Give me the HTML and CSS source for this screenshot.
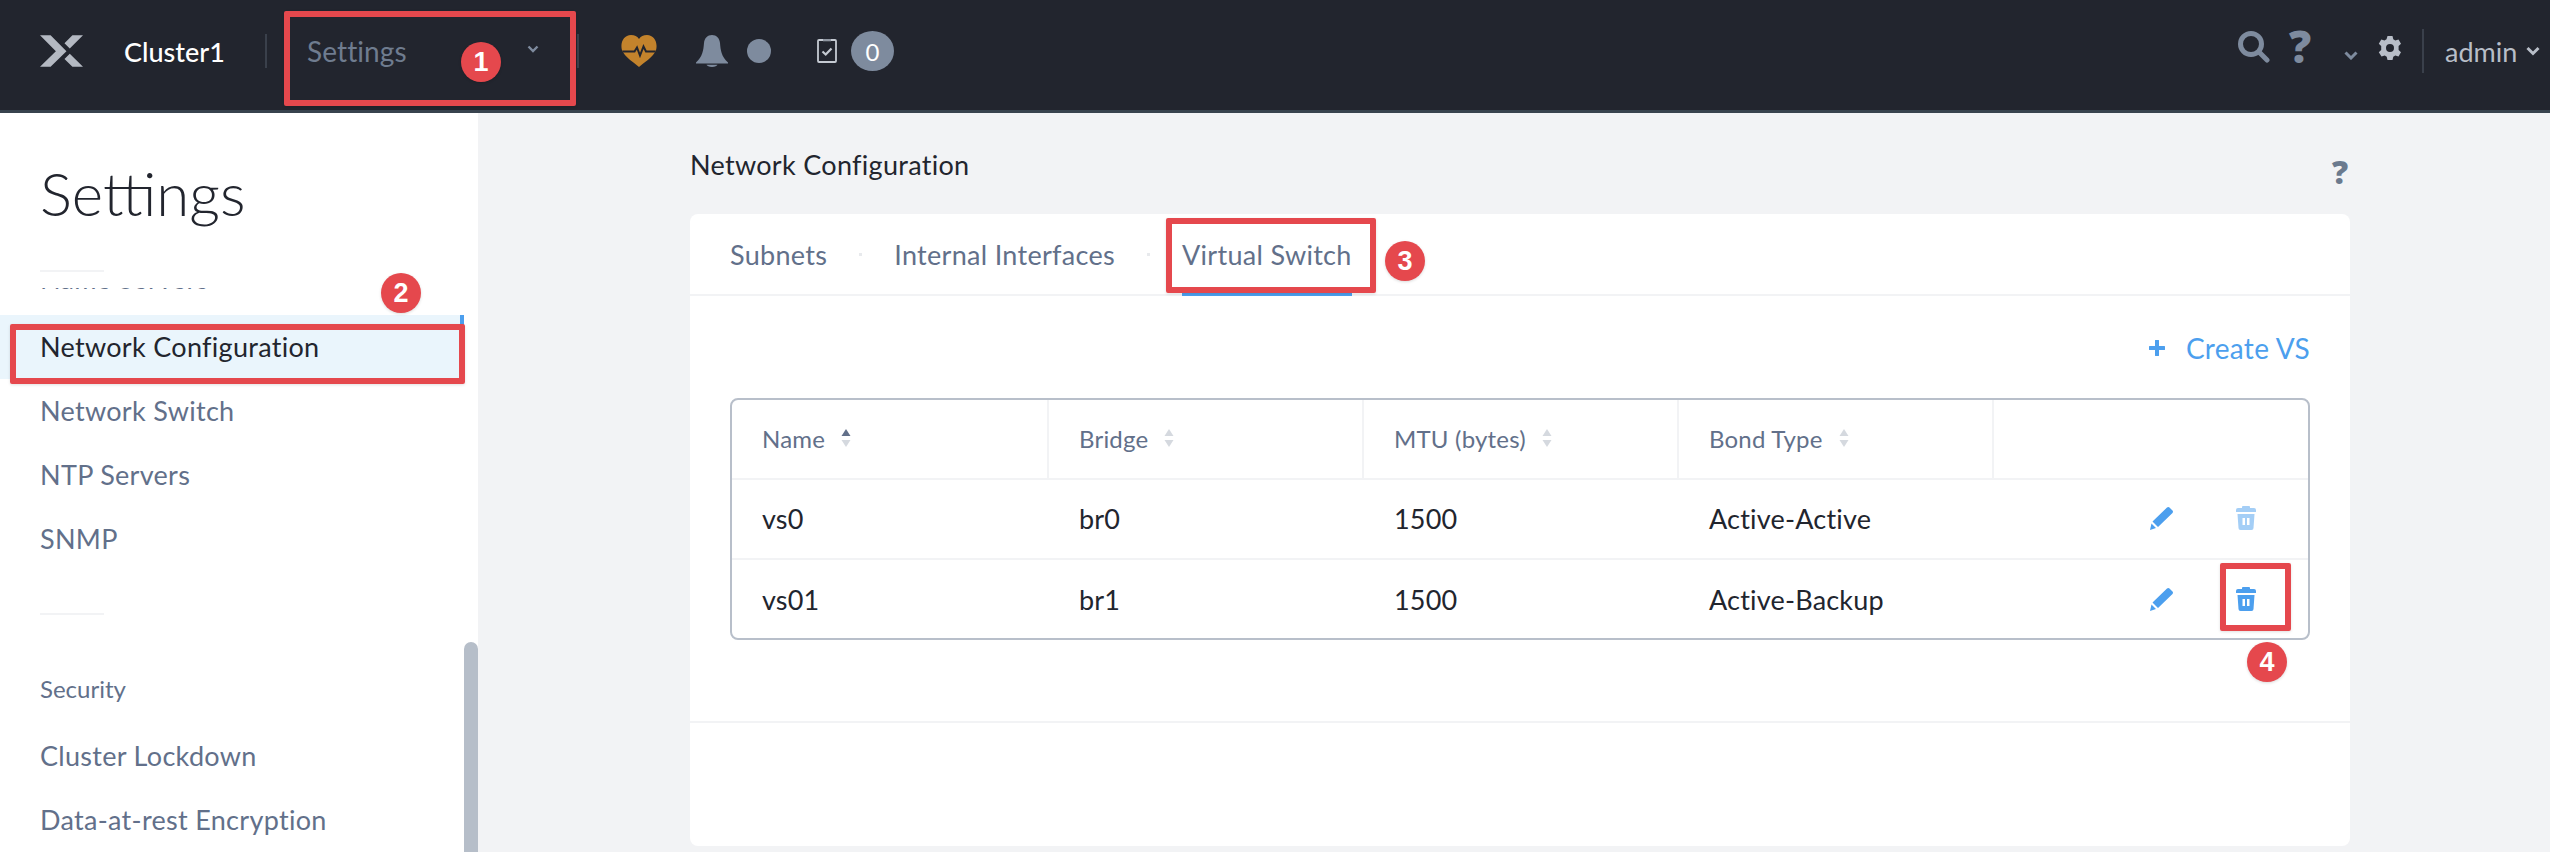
FILE: index.html
```html
<!DOCTYPE html>
<html lang="en">
<head>
<meta charset="utf-8">
<title>Network Configuration</title>
<link rel="stylesheet" href="styles.css">
</head>
<body>
<div class="page">
  <header class="topbar">
    <svg class="logo" viewBox="30 42 130 95"><path fill="#b4b9c2" d="M30 42h32l48 48-48 47H30l48-47zM160 42h-32l-24 24 16 16zM104 114l16-16 40 39h-32z"/></svg>
    <span class="cluster">Cluster1</span>
    <span class="vline vline-a"></span>
    <div class="crumb"><span>Settings</span><svg class="chev-s" viewBox="0 0 12 8"><path d="M1.500 1.500 6 6l4.500-4.500" fill="none" stroke="#7e8b9e" stroke-width="2.400"/></svg></div>
    <span class="vline"></span>
    <svg class="heart" viewBox="0 0 36 32"><path fill="#c3832c" d="M18 32C15 29 3 22 .8 14.500-.8 7 3 0 10 0c3.500 0 6.500 1.500 8 4 1.500-2.500 4.500-4 8-4 7 0 10.800 7 9.200 14.500C33 22 21 29 18 32z"/><path fill="none" stroke="#22252e" stroke-width="2" d="M1.500 16.500h12l2.500-4 3 8 3.500-9 2.500 5h9.500"/></svg>
    <svg class="bell" viewBox="0 0 32 32"><path fill="#7e8b9e" d="M16 0c4.500 0 7.500 3 8 8 .5 7 1.500 14 8 19.500v1H0v-1C6.500 22 7.500 15 8 8c.5-5 3.500-8 8-8z"/><path fill="#7e8b9e" d="M10.500 29.800h11C21 31 19 32 16 32s-5-1-5.500-2.200z"/></svg>
    <span class="dot"></span>
    <svg class="tasks" viewBox="0 0 20 24"><path d="M6 1H2a1 1 0 0 0-1 1v20a1 1 0 0 0 1 1h16a1 1 0 0 0 1-1V2a1 1 0 0 0-1-1h-4" fill="none" stroke="#c5cad2" stroke-width="1.800"/><path d="M6 1h8" stroke="#8f96a1" stroke-width="2.600"/><path d="m5.500 12.500 3.200 3 5.800-6" fill="none" stroke="#c5cad2" stroke-width="2.200"/></svg>
    <span class="count">0</span>
    <div class="tools">
      <svg class="search" viewBox="0 0 32 32"><circle cx="13" cy="13" r="10.500" fill="none" stroke="#7e8b9e" stroke-width="5"/><path d="m21 21 8 8" stroke="#7e8b9e" stroke-width="5" stroke-linecap="round"/></svg>
      <span class="qm">?</span>
      <svg class="chev-t" viewBox="0 0 14 9"><path d="M1.500 1.500 7 7l5.500-5.500" fill="none" stroke="#7e8b9e" stroke-width="3"/></svg>
      <svg class="gear" viewBox="0 0 24 24"><path fill="#b8bec8" fill-rule="evenodd" d="M9.500 0h5l.8 3.300 2 1.100 3.200-1 2.500 4.300-2.400 2.300v4l2.400 2.300-2.500 4.300-3.200-1-2 1.100-.8 3.300h-5l-.8-3.300-2-1.100-3.200 1L.8 16.300l2.400-2.300v-4L.8 7.700l2.500-4.300 3.200 1 2-1.100zM12 8a4 4 0 1 0 0 8 4 4 0 0 0 0-8z"/></svg>
      <span class="vline vline-b"></span>
      <span class="user">admin</span>
      <svg class="chev-u" viewBox="0 0 14 10"><path d="M1.500 2 7 7.500 12.500 2" fill="none" stroke="#b8bec8" stroke-width="3"/></svg>
    </div>
  </header>
  <div class="body">
    <aside class="sidebar">
      <h1 class="side-title">Settings</h1>
      <div class="rule"></div>
      <div class="menu">
        <div class="clip"><div class="item-clipped">Name Servers</div></div>
        <div class="item active">Network Configuration</div>
        <div class="item">Network Switch</div>
        <div class="item">NTP Servers</div>
        <div class="item">SNMP</div>
      </div>
      <div class="rule rule-b"></div>
      <div class="group">Security</div>
      <div class="item">Cluster Lockdown</div>
      <div class="item">Data-at-rest Encryption</div>
      <div class="thumb"></div>
    </aside>
    <main class="main">
      <div class="title-row">
        <span class="page-title">Network Configuration</span>
        <span class="qm qm-main">?</span>
      </div>
      <section class="card">
        <nav class="tabs">
          <span class="tab">Subnets</span><i class="tab-dot"></i>
          <span class="tab">Internal Interfaces</span><i class="tab-dot"></i>
          <span class="tab tab-on">Virtual Switch</span>
        </nav>
        <div class="actions">
          <span class="create"><svg class="plus" viewBox="0 0 16 16"><path d="M8 1v14M1 8h14" stroke="#4c9fee" stroke-width="4" stroke-linecap="round"/></svg>Create VS</span>
        </div>
        <div class="table">
          <div class="row head">
            <div class="cell">Name<svg class="sort" viewBox="0 0 10 18"><path class="up on" d="M5 0l4.500 7h-9z"/><path class="dn" d="M5 18l4.500-7h-9z"/></svg></div>
            <div class="cell">Bridge<svg class="sort" viewBox="0 0 10 18"><path class="up" d="M5 0l4.500 7h-9z"/><path class="dn" d="M5 18l4.500-7h-9z"/></svg></div>
            <div class="cell">MTU (bytes)<svg class="sort" viewBox="0 0 10 18"><path class="up" d="M5 0l4.500 7h-9z"/><path class="dn" d="M5 18l4.500-7h-9z"/></svg></div>
            <div class="cell">Bond Type<svg class="sort" viewBox="0 0 10 18"><path class="up" d="M5 0l4.500 7h-9z"/><path class="dn" d="M5 18l4.500-7h-9z"/></svg></div>
            <div class="cell cell-end"></div>
          </div>
          <div class="row">
            <div class="cell">vs0</div><div class="cell">br0</div><div class="cell">1500</div><div class="cell">Active-Active</div>
            <div class="cell cell-icons">
              <svg class="pen" viewBox="0 0 23 23"><path fill="#4c9fee" d="M17 0.500a2 2 0 0 1 2.500 0l3 3a2 2 0 0 1 0 2.500L8 20l-5.500-5.500zM1.500 16.500 6 21l-6 2z"/></svg>
              <svg class="trash faded" viewBox="0 0 20 24"><path fill="#4c9fee" fill-rule="evenodd" d="M7 0h6a1 1 0 0 1 1 1v1h4a2 2 0 0 1 2 2v2H0V4a2 2 0 0 1 2-2h4V1a1 1 0 0 1 1-1zM1.500 8h17l-1 14a2 2 0 0 1-2 2h-11a2 2 0 0 1-2-2zM6.500 12v7h2.500v-7zM11 12v7h2.500v-7z"/></svg>
            </div>
          </div>
          <div class="row">
            <div class="cell">vs01</div><div class="cell">br1</div><div class="cell">1500</div><div class="cell">Active-Backup</div>
            <div class="cell cell-icons">
              <svg class="pen" viewBox="0 0 23 23"><path fill="#4c9fee" d="M17 0.500a2 2 0 0 1 2.500 0l3 3a2 2 0 0 1 0 2.500L8 20l-5.500-5.500zM1.500 16.500 6 21l-6 2z"/></svg>
              <svg class="trash" viewBox="0 0 20 24"><path fill="#4c9fee" fill-rule="evenodd" d="M7 0h6a1 1 0 0 1 1 1v1h4a2 2 0 0 1 2 2v2H0V4a2 2 0 0 1 2-2h4V1a1 1 0 0 1 1-1zM1.500 8h17l-1 14a2 2 0 0 1-2 2h-11a2 2 0 0 1-2-2zM6.500 12v7h2.500v-7zM11 12v7h2.500v-7z"/></svg>
            </div>
          </div>
        </div>
        <div class="card-foot"></div>
      </section>
    </main>
  </div>
  <div class="mark box-1"></div>
  <div class="mark box-2"></div>
  <div class="mark box-3"></div>
  <div class="mark box-4"></div>
  <span class="step step-1">1</span>
  <span class="step step-2">2</span>
  <span class="step step-3">3</span>
  <span class="step step-4">4</span>
</div>
</body>
</html>
```
FILE: styles.css
```css
* { box-sizing: border-box; }
html, body { margin: 0; height: 100%; }
body { font-family: Lato, "Open Sans", sans-serif; background: #f2f3f5; overflow: hidden; }
.page { position: relative; width: 2550px; height: 852px; overflow: hidden; display: flex; flex-direction: column; }

/* top bar */
.topbar { height: 113px; flex: none; background: #22252e; border-bottom: 3px solid #38434e; display: flex; align-items: center; padding: 0 0 8px 40px; color: #fff; }
.logo { width: 43px; height: 32px; flex: none; }
.cluster { margin-left: 41px; width: 100px; font-size: 27px; font-weight: 500; color: #fff; }
.vline { width: 2px; height: 34px; background: #3a404b; flex: none; }
.vline-a { margin-left: 41px; }
.crumb { width: 310px; padding-left: 40px; display: flex; align-items: center; font-size: 28px; letter-spacing: .1px; color: #6f7c8f; }
.crumb span { width: 220px; }
.chev-s { width: 12px; height: 8px; margin-top: -4px; }
.heart { width: 36px; height: 32px; margin-left: 42px; }
.bell { width: 32px; height: 32px; margin-left: 39px; }
.dot { width: 24px; height: 24px; margin-left: 19px; border-radius: 50%; background: #7e8b9e; }
.tasks { width: 20px; height: 24px; margin-left: 46px; }
.count { width: 43px; height: 40px; margin-left: 14px; border-radius: 50%; background: #7e8b9e; color: #fff; font-size: 24px; display: flex; align-items: center; justify-content: center; }
.tools { margin-left: auto; display: flex; align-items: center; height: 100%; }
.search { width: 32px; height: 32px; margin-top: -8px; }
.qm { font-family: "Open Sans", sans-serif; font-weight: 800; font-size: 44px; line-height: 44px; color: #7e8b9e; width: 20px; display: flex; justify-content: center; margin: -10px 0 0 20px; }
.chev-t { width: 14px; height: 9px; margin: 8px 0 0 34px; }
.gear { width: 24px; height: 24px; margin: -6px 0 0 20px; }
.vline-b { height: 44px; margin-left: 20px; }
.user { margin-left: 21px; font-size: 27px; color: #b8bec8; width: 75px; }
.chev-u { width: 14px; height: 10px; margin: 0 10px 0 6px; }

/* sidebar */
.body { flex: 1; min-height: 0; display: flex; }
.sidebar { position: relative; width: 478px; flex: none; background: #fff; overflow: hidden; }
.side-title { margin: 0; padding: 44px 0 0 40px; height: 157px; font-size: 60px; line-height: 72px; font-weight: 300; color: #22252e; }
.rule { width: 64px; height: 2px; margin-left: 40px; background: #f2f3f5; }
.rule-b { margin-top: 42px; }
.clip { margin-top: 16px; height: 27px; overflow: hidden; }
.item-clipped { margin-top: -25px; padding-left: 40px; font-size: 27px; line-height: 32px; letter-spacing: .3px; color: #62708a; }
.item { height: 64px; padding: 0 0 2px 40px; display: flex; align-items: center; font-size: 27px; letter-spacing: .3px; color: #62708a; }
.menu .item.active { position: relative; width: 464px; color: #22252e; background: #eaf5fc; }
.active::after { content: ""; position: absolute; right: 0; top: 0; width: 4px; height: 12px; background: #4c9fee; }
.group { height: 71px; margin-top: 38px; padding-left: 40px; display: flex; align-items: center; font-size: 24px; color: #62708a; }
.thumb { position: absolute; left: 464px; top: 529px; width: 14px; height: 260px; border-radius: 7px 7px 0 0; background: #b6bec9; }

/* main */
.main { flex: 1; min-width: 0; padding: 0 200px 6px 212px; display: flex; flex-direction: column; }
.title-row { height: 101px; flex: none; display: flex; justify-content: space-between; padding-top: 32px; }
.page-title { font-size: 27px; line-height: 40px; letter-spacing: .3px; color: #22252e; }
.qm-main { font-size: 32px; line-height: 44px; margin: 5px 2px 0 0; width: 16px; color: #6b7a8e; }
.card { flex: 1; min-height: 0; background: #fff; border-radius: 8px; display: flex; flex-direction: column; }
.tabs { height: 82px; flex: none; border-bottom: 2px solid #f2f3f5; display: flex; align-items: stretch; padding-left: 40px; }
.tab { display: flex; align-items: center; padding-top: 2px; font-size: 27px; letter-spacing: .3px; color: #62708a; margin-bottom: -2px; border-bottom: 4px solid transparent; }
.tab-on { border-bottom-color: #4c9fee; }
.tab-dot { align-self: center; width: 3px; height: 3px; margin: 0 32px; background: #e8eaed; }
.actions { height: 102px; flex: none; padding: 2px 40px 0 0; display: flex; justify-content: flex-end; align-items: center; }
.create { display: flex; align-items: center; font-size: 28px; letter-spacing: .3px; color: #4c9fee; }
.plus { width: 16px; height: 16px; margin-right: 21px; }
.table { margin: 0 40px; height: 242px; flex: none; border: 2px solid #b8bfca; border-radius: 8px; display: flex; flex-direction: column; }
.row { height: 80px; flex: none; display: grid; grid-template-columns: 317px 315px 315px 315px 1fr; border-bottom: 2px solid #f2f3f5; color: #22252e; font-size: 27px; letter-spacing: .2px; }
.row:last-child { border-bottom: none; }
.row .cell { display: flex; align-items: center; padding: 0 0 2px 30px; }
.head { color: #62708a; font-size: 24px; }
.head .cell { border-right: 2px solid #f2f3f5; }
.head .cell-end { border-right: none; }
.sort { width: 10px; height: 18px; margin-left: 16px; fill: #d5d9df; }
.sort .on { fill: #62708a; }
.row .cell-icons { padding-left: 156px; }
.pen { width: 23px; height: 23px; }
.trash { width: 20px; height: 24px; margin-left: 63px; }
.faded { opacity: .5; }
.card-foot { height: 2px; margin-top: 81px; flex: none; background: #f2f3f5; }

/* annotations over the screenshot */
.mark { position: absolute; border: 6px solid #e5484d; border-radius: 2px; box-shadow: 0 1px 3px rgba(0,0,0,.12); }
.box-1 { left: 284px; top: 11px; width: 292px; height: 95px; }
.box-2 { left: 10px; top: 324px; width: 455px; height: 60px; }
.box-3 { left: 1166px; top: 218px; width: 210px; height: 75px; }
.box-4 { left: 2220px; top: 563px; width: 71px; height: 68px; }
.step { position: absolute; width: 40px; height: 40px; border-radius: 50%; background: #e5484d; color: #fff; font-family: "Liberation Sans", sans-serif; font-weight: 700; font-size: 27px; display: flex; align-items: center; justify-content: center; box-shadow: 0 1px 3px rgba(0,0,0,.15); }
.step-1 { left: 461px; top: 42px; }
.step-2 { left: 381px; top: 273px; }
.step-3 { left: 1385px; top: 241px; }
.step-4 { left: 2247px; top: 642px; }
```
